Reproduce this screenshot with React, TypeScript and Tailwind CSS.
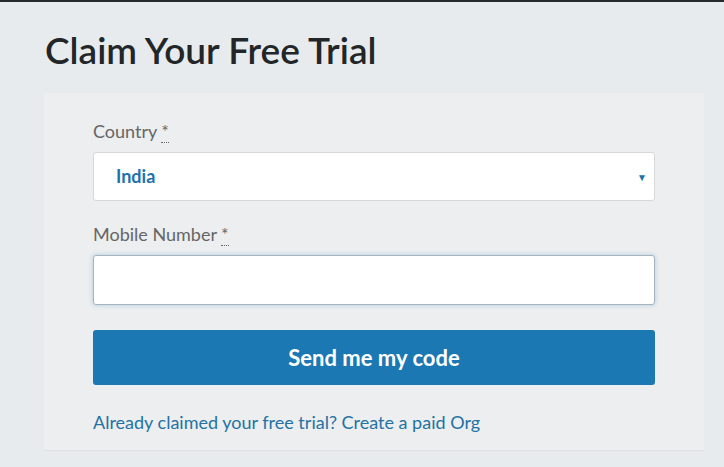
import { useState } from "react";

const RequiredMark = () => (
  <abbr title="required" className="no-underline border-b border-dotted border-[#666] ml-1">
    *
  </abbr>
);

const App = () => {
  const [country, setCountry] = useState("India");
  const [mobile, setMobile] = useState("");

  return (
    <div
      className="min-h-[467px] w-full bg-[#e8ebed] border-t-2 border-[#24292d]"
      style={{ fontFamily: "Lato, 'Open Sans', sans-serif" }}
    >
      <div className="pl-[44px] pr-[20px]">
        {/* Header */}
        <h1 className="pt-[26px] pb-[21px] text-[37px] leading-[44px] font-semibold text-[#222629] pl-px">
          Claim Your Free Trial
        </h1>

        {/* Card */}
        <div className="bg-[#eceeef] pl-[49px] pr-[49px] pt-[27px] pb-[17px] shadow-[0_1px_1px_rgba(0,0,0,0.04)]">
          <label className="block text-[18px] leading-[22px] text-[#666] mb-[10px]">
            Country
            <RequiredMark />
          </label>
          <div className="relative">
            <select
              value={country}
              onChange={(e) => setCountry(e.target.value)}
              className="appearance-none w-full h-[49px] bg-white rounded-[3px] border border-[#d6d8da] pl-[22px] text-[18px] font-bold text-[#1d72ab] outline-none"
            >
              <option>India</option>
              <option>United States</option>
            </select>
            <span className="absolute right-[8px] top-[18px] text-[10px] text-[#1d72ab] pointer-events-none">
              ▼
            </span>
          </div>

          <label className="block text-[18px] leading-[22px] text-[#666] mt-[22px] mb-[10px]">
            Mobile Number
            <RequiredMark />
          </label>
          <input
            type="text"
            autoFocus
            value={mobile}
            onChange={(e) => setMobile(e.target.value)}
            className="w-full h-[50px] bg-white rounded-[3px] border border-[#a7b5c2] shadow-[0_0_4px_rgba(90,150,200,0.45)] px-[17px] text-[18px] text-[#222] caret-[#222] outline-none"
          />

          <button className="mt-[25px] w-full h-[55px] rounded-[3px] bg-[#1b78b3] text-white text-[22px] font-bold">
            Send me my code
          </button>

          <div className="mt-[26px] text-[18px] leading-[22px] text-[#2472a4]">
            <a href="#">Already claimed your free trial? Create a paid Org</a>
          </div>
        </div>
      </div>
    </div>
  );
};

export default App;
